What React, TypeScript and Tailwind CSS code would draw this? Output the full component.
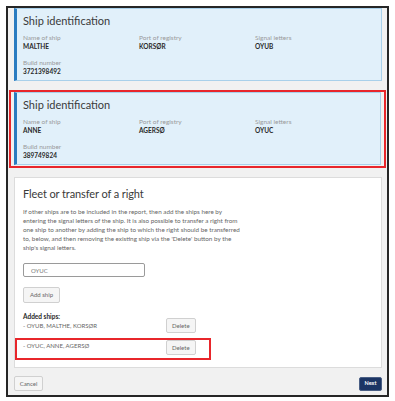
const font = "font-['Lato','Liberation_Sans',sans-serif]";

type Ship = { name: string; port: string; signal: string; build: string };

function ShipCard({ ship }: { ship: Ship }) {
  return (
    <div className="h-[73px] border border-[#a9d0ea] border-l-[3px] border-l-[#2b7cc0] bg-[#e1f0fa] pl-[6px] pt-[4px]">
      <h2 className="text-[11px] leading-[15px] text-[#3a3a3a]">Ship identification</h2>
      <div className="mt-[5px] grid grid-cols-[116px_116px_1fr]">
        <Field label="Name of ship" value={ship.name} />
        <Field label="Port of registry" value={ship.port} />
        <Field label="Signal letters" value={ship.signal} />
      </div>
      <div className="mt-[6px]">
        <Field label="Build number" value={ship.build} />
      </div>
    </div>
  );
}

function Field({ label, value }: { label: string; value: string }) {
  return (
    <div>
      <p className="text-[6.5px] leading-[9px] text-[#9a9a9a]">{label}</p>
      <p className="text-[6.5px] font-bold leading-[10px] text-[#2a2a2a]">{value}</p>
    </div>
  );
}

function SmallButton({ children }: { children: string }) {
  return (
    <button className="flex h-[15px] items-center rounded-[2px] border border-[#d0d0d0] bg-[#f5f5f5] px-[5px] text-[6px] leading-none text-[#666]">
      {children}
    </button>
  );
}

export default function App() {
  return (
    <div className={`${font} h-[401px] w-[395px] bg-white pl-[6px] pt-[6px]`}>
      <div className="flex h-[391px] w-[383px] flex-col border-2 border-[#262626] bg-[#f1f1f1]">
        <div className="ml-[6px] mr-[5px] h-[74px]">
          <ShipCard ship={{ name: "MALTHE", port: "KORSØR", signal: "OYUB", build: "3721398492" }} />
        </div>

        <div className="mx-[1px] mt-[8px] h-[78px] border-2 border-[#e8262b] px-[3px]">
          <ShipCard ship={{ name: "ANNE", port: "AGERSØ", signal: "OYUC", build: "389749824" }} />
        </div>

        <div className="ml-[6px] mr-[5px] mt-[9px] h-[191px] border border-[#dcdcdc] bg-white px-[8px] pt-[8px]">
          <h2 className="text-[11px] leading-[16px] tracking-[-0.1px] text-[#3a3a3a]">Fleet or transfer of a right</h2>
          <p className="mt-[5px] text-[6.3px] leading-[9px] text-[#666]">
            <span className="block">If other ships are to be included in the report, then add the ships here by</span>
            <span className="block">entering the signal letters of the ship. It is also possible to transfer a right from</span>
            <span className="block">one ship to another by adding the ship to which the right should be transferred</span>
            <span className="block">to, below, and then removing the existing ship via the 'Delete' button by the</span>
            <span className="block">ship's signal letters.</span>
          </p>
          <div className="mt-[11px] flex h-[14px] w-[122px] items-center rounded-[2px] border border-[#9a9a9a] px-[7px] text-[6px] text-[#777]">
            OYUC
          </div>
          <div className="mt-[10px] flex">
            <button className="flex h-[16px] items-center rounded-[2px] border border-[#d0d0d0] bg-[#f5f5f5] px-[6px] text-[6px] leading-none text-[#666]">
              Add ship
            </button>
          </div>
          <p className="mt-[9px] text-[6.5px] font-bold leading-[9px] text-[#2a2a2a]">Added ships:</p>
          <div className="flex h-[17px] items-start">
            <span className="w-[143px] text-[6px] leading-[9px] text-[#666]">- OYUB, MALTHE, KORSØR</span>
            <div className="mt-[-3px] flex">
              <SmallButton>Delete</SmallButton>
            </div>
          </div>
          <div className="ml-[-8px] flex h-[22px] w-[196px] items-start border-2 border-[#e8262b] pl-[6px]">
            <span className="w-[143px] pt-[1px] text-[6px] leading-[9px] text-[#666]">- OYUC, ANNE, AGERSØ</span>
            <div className="flex">
              <SmallButton>Delete</SmallButton>
            </div>
          </div>
        </div>

        <div className="ml-[6px] mr-[5px] mt-[8px] flex items-center justify-between">
          <button className="flex h-[15px] w-[29px] items-center justify-center rounded-[2px] border border-[#d0d0d0] bg-[#f5f5f5] text-[6px] leading-none text-[#666]">
            Cancel
          </button>
          <button className="flex h-[14px] w-[23px] items-center justify-center rounded-[2px] border border-[#4a5f85] bg-[#1c3564] text-[5.5px] font-bold leading-none text-white">
            Next
          </button>
        </div>
      </div>
    </div>
  );
}
